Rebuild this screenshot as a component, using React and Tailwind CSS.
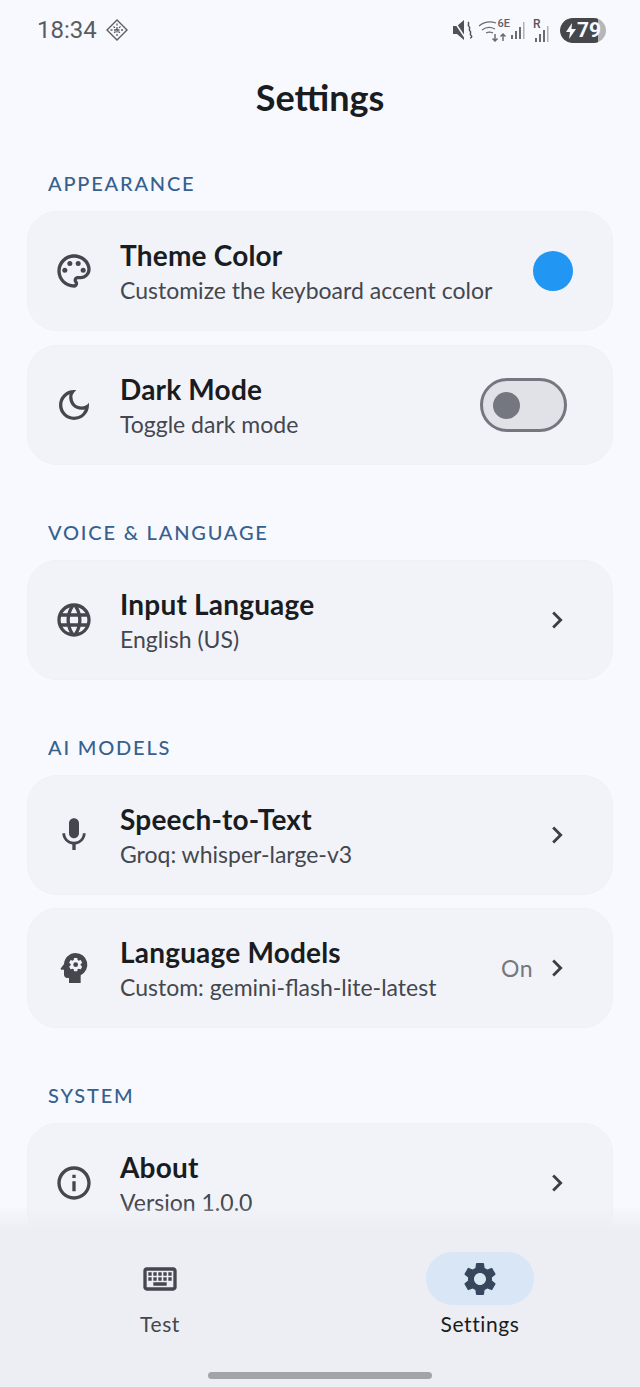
import React from "react";
import { MdOutlinePalette, MdOutlineDarkMode, MdLanguage, MdMic, MdPsychology, MdInfoOutline, MdChevronRight, MdOutlineKeyboard, MdSettings } from "react-icons/md";

function Card({ icon: Icon, title, sub, right, className = "" }) {
  return (
    <div className={`flex h-[120px] shrink-0 items-center rounded-[30px] border border-[#f0f1f7] bg-[#f2f3f9] pl-[26px] pr-[38px] ${className}`}>
      <Icon className="h-[40px] w-[40px] shrink-0 text-[#44474e]" />
      <div className="ml-[26px] flex min-w-0 flex-1 flex-col pt-[1px]">
        <div className="text-[28px] font-bold leading-[34px] tracking-[0.2px] text-[#191c20]">{title}</div>
        <div className="mt-[2px] text-[23px] leading-[32px] text-[#44474e]">{sub}</div>
      </div>
      {right}
    </div>
  );
}

function Chevron() {
  return <MdChevronRight className="h-[34px] w-[34px] shrink-0 text-[#3b3e45]" />;
}

function Label({ children, className = "" }) {
  return <div className={`pl-[21px] text-[20px] font-medium leading-[26px] tracking-[1.8px] text-[#36618e] ${className}`}>{children}</div>;
}

function StatusIcons() {
  return (
    <div className="flex items-center">
      <svg width="21" height="22" viewBox="0 0 21 22" fill="#505257">
        <path d="M1 7h4l7-6v20l-7-6H1z" />
        <path d="M2 2l12 18" stroke="#f8f9ff" strokeWidth="1.500" />
        <path d="M16 3c2 1.500-1 3 1 4.500s-1 3 1 4.500-1 3 1 4.500-1 2 0 3" fill="none" stroke="#505257" strokeWidth="1.500" />
      </svg>
      <div className="relative ml-[5px] h-[24px] w-[33px]">
        <svg width="33" height="24" viewBox="0 0 33 24" className="absolute left-0 top-0" fill="none" stroke="#6a6c70">
          <path d="M1 8C6 4 12 3 18 5" strokeWidth="1.200" />
          <path d="M4 12c4-3 9-3 13-1" strokeWidth="1.200" />
          <path d="M8 15c2-1 5-1 7 0" strokeWidth="1.200" />
          <path d="M17 16v7M14.500 20.500l2.500 2.500 2.500-2.500M25 23v-7M22.500 18.500l2.500-2.500 2.500 2.500" strokeWidth="1.500" />
        </svg>
        <span className="absolute right-[1px] top-[-1px] font-['Roboto',sans-serif] text-[11px] font-medium leading-[14px] text-[#5f6165]">6E</span>
      </div>
      <svg width="18" height="20" viewBox="0 0 18 20" className="ml-[-1px]" fill="#6a6c70">
        <rect x="1" y="15" width="2" height="4" /><rect x="5" y="11" width="2" height="8" /><rect x="9" y="7" width="2" height="12" /><rect x="13" y="2" width="1.500" height="17" fill="#b0b1b4" />
      </svg>
      <div className="relative ml-[5px] h-[22px] w-[18px]">
        <span className="absolute left-0 top-[-4px] font-['Roboto',sans-serif] text-[12px] font-medium text-[#555]">R</span>
        <svg width="18" height="16" viewBox="0 0 18 16" className="absolute bottom-[-1px] left-[2px]" fill="#6a6c70">
          <rect x="0" y="12" width="2" height="4" /><rect x="4" y="8" width="2" height="8" /><rect x="8" y="4" width="2" height="12" /><rect x="12" y="0" width="1.500" height="16" fill="#b0b1b4" />
        </svg>
      </div>
      <div className="relative ml-[9px] flex h-[25px] w-[46px] items-center overflow-hidden rounded-full bg-[#b5b6b9]">
        <div className="h-full w-[38px] rounded-l-full bg-[#45474b]" />
        <svg width="12" height="16" viewBox="0 0 12 16" className="absolute left-[5px] top-[5px]" fill="#f8f9ff">
          <path d="M7 0 1 9h4l-1 7 7-10H6.500z" />
        </svg>
        <span className="absolute left-[17px] top-0 font-['Roboto',sans-serif] text-[21px] font-bold leading-[25px] text-[#f8f9ff]">79</span>
      </div>
    </div>
  );
}

export default function App() {
  return (
    <div className="relative flex h-[1387px] w-[640px] flex-col overflow-hidden bg-[#f8f9ff] font-['Lato',sans-serif]">
      <div className="flex h-[60px] shrink-0 items-center justify-between pl-[37px] pr-[34px]">
        <div className="flex items-center">
          <span className="font-['Roboto',sans-serif] text-[24px] leading-[30px] text-[#5a5c60]">18:34</span>
          <svg width="24" height="24" viewBox="0 0 24 24" className="ml-[8px]" fill="none" stroke="#5a5c60" strokeWidth="1.400">
            <path d="M12 2l10 10-10 10L2 12z" />
            <path d="M8.500 8.500l7 7M15.500 8.500l-7 7M12 5.500v13M5.500 12h13" strokeWidth="1.300" strokeDasharray="2 1.500" />
          </svg>
        </div>
        <StatusIcons />
      </div>

      <div className="mt-[12px] flex h-[50px] shrink-0 items-center justify-center text-[36px] font-bold text-[#191c20]">Settings</div>

      <div className="flex min-h-0 flex-1 flex-col overflow-hidden px-[27px]">
        <Label className="mt-[48px]">APPEARANCE</Label>
        <Card className="mt-[15px]" icon={MdOutlinePalette} title="Theme Color" sub="Customize the keyboard accent color"
          right={<div className="mr-[1px] h-[40px] w-[40px] shrink-0 rounded-full bg-[#2196f3]" />} />
        <Card className="mt-[14px]" icon={MdOutlineDarkMode} title="Dark Mode" sub="Toggle dark mode"
          right={
            <div className="mr-[7px] flex h-[54px] w-[87px] shrink-0 items-center rounded-full border-[3px] border-[#74777f] bg-[#e0e2e8] pl-[10px]">
              <div className="h-[27px] w-[27px] rounded-full bg-[#74777f]" />
            </div>
          } />

        <Label className="mt-[54px]">VOICE &amp; LANGUAGE</Label>
        <Card className="mt-[15px]" icon={MdLanguage} title="Input Language" sub="English (US)" right={<Chevron />} />

        <Label className="mt-[54px]">AI MODELS</Label>
        <Card className="mt-[15px]" icon={MdMic} title="Speech-to-Text" sub="Groq: whisper-large-v3" right={<Chevron />} />
        <Card className="mt-[13px]" icon={MdPsychology} title="Language Models" sub="Custom: gemini-flash-lite-latest"
          right={<><span className="mr-[7px] text-[23px] tracking-[0.5px] text-[#74777f]">On</span><Chevron /></>} />

        <Label className="mt-[54px]">SYSTEM</Label>
        <Card className="mt-[15px]" icon={MdInfoOutline} title="About" sub="Version 1.0.0" right={<Chevron />} />
      </div>

      <div className="pointer-events-none absolute bottom-[157px] left-0 h-[25px] w-full bg-gradient-to-b from-[#eceef400] to-[#eceef4]" />

      <div className="relative flex h-[157px] shrink-0 bg-[#eceef4] pt-[22px]">
        <div className="flex w-1/2 flex-col items-center">
          <div className="flex h-[53px] w-[108px] items-center justify-center rounded-full">
            <MdOutlineKeyboard className="h-[40px] w-[40px] text-[#44474e]" />
          </div>
          <div className="mt-[5px] text-[21px] leading-[28px] tracking-[0.6px] text-[#44474e]">Test</div>
        </div>
        <div className="flex w-1/2 flex-col items-center">
          <div className="flex h-[53px] w-[108px] items-center justify-center rounded-full bg-[#d9e6f6]">
            <MdSettings className="h-[40px] w-[40px] text-[#36475c]" />
          </div>
          <div className="mt-[5px] text-[21px] leading-[28px] tracking-[0.6px] text-[#191c20]">Settings</div>
        </div>
        <div className="absolute bottom-[8px] left-[208px] h-[7px] w-[224px] rounded-full bg-[#a3a4a8]" />
      </div>
    </div>
  );
}
